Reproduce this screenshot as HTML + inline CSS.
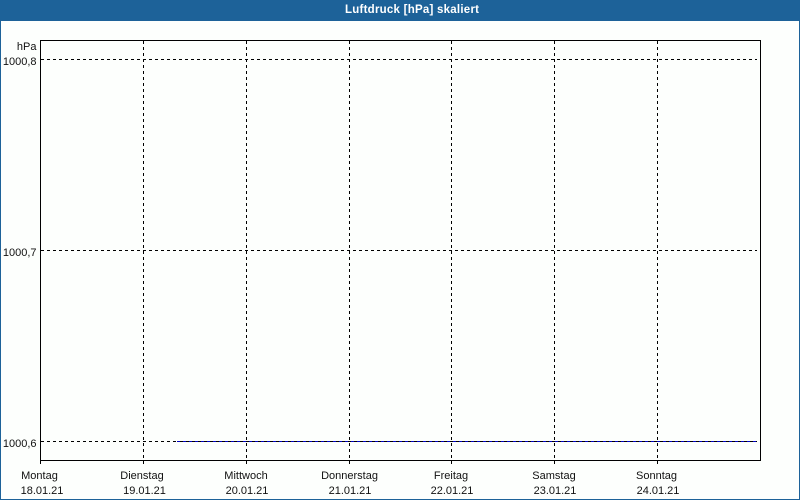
<!DOCTYPE html>
<html><head><meta charset="utf-8"><style>
html,body{margin:0;padding:0;background:#fff}
svg{display:block}
text{font-family:"Liberation Sans",sans-serif;font-size:11px;fill:#111}
</style></head><body>
<svg width="800" height="500" viewBox="0 0 800 500" xmlns="http://www.w3.org/2000/svg" shape-rendering="crispEdges">
<rect width="800" height="500" fill="#1d6299"/>
<rect x="1" y="21" width="798" height="478" fill="#fdfffd"/>
<text x="345" y="13" textLength="134" lengthAdjust="spacing" style="font-size:11.500px;font-weight:bold;fill:#fff">Luftdruck [hPa] skaliert</text>
<g stroke="#000" stroke-width="1" stroke-dasharray="3 3" fill="none">
<path d="M41 59.5H757"/><path d="M41 250.5H757"/><path d="M41 441.5H177"/>
<path d="M143.5 41V464"/><path d="M246.5 41V464"/><path d="M349.5 41V464"/><path d="M451.5 41V464"/><path d="M554.5 41V464"/><path d="M657.5 41V464"/>
</g>
<path d="M177 441.5H757" stroke="#000" stroke-width="1" fill="none"/>
<path d="M177 441.5H757" stroke="#0000c0" stroke-width="1" stroke-dasharray="3 3" fill="none"/>
<rect x="40.500" y="40.500" width="720" height="420" fill="none" stroke="#000"/>
<path d="M40.500 460V464" stroke="#000"/>
<g text-anchor="end"><text x="36.500" y="50">hPa</text><text x="36.500" y="65">1000,8</text><text x="36.500" y="256">1000,7</text><text x="36.500" y="447">1000,6</text></g>
<g text-anchor="middle">
<text x="39.500" y="479">Montag</text><text x="42" y="494">18.01.21</text>
<text x="142" y="479">Dienstag</text><text x="144.500" y="494">19.01.21</text>
<text x="246" y="479">Mittwoch</text><text x="247" y="494">20.01.21</text>
<text x="349.500" y="479">Donnerstag</text><text x="350" y="494">21.01.21</text>
<text x="451" y="479">Freitag</text><text x="452" y="494">22.01.21</text>
<text x="554" y="479">Samstag</text><text x="555" y="494">23.01.21</text>
<text x="656.500" y="479">Sonntag</text><text x="658" y="494">24.01.21</text>
</g>
</svg>
</body></html>
